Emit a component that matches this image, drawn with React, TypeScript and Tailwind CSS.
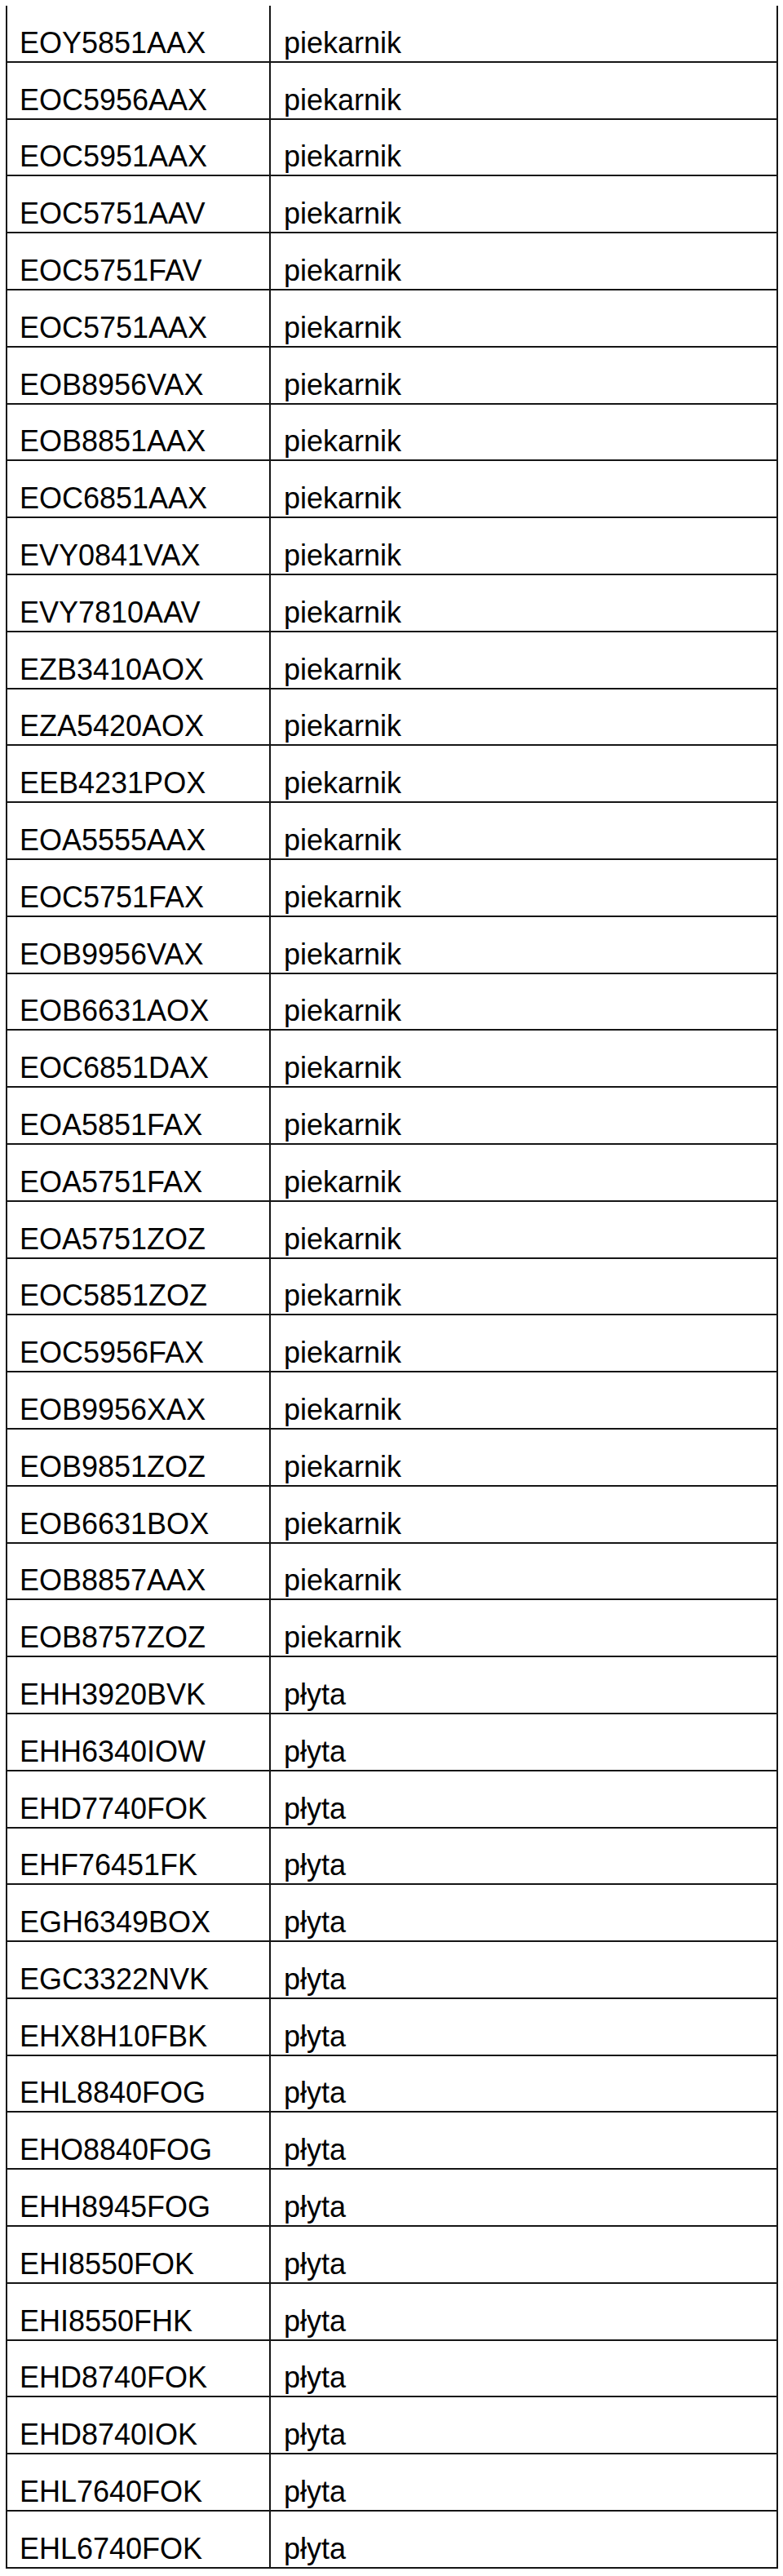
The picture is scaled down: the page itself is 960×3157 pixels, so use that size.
const rows: [string, string][] = [
  ["EOY5851AAX", "piekarnik"],
  ["EOC5956AAX", "piekarnik"],
  ["EOC5951AAX", "piekarnik"],
  ["EOC5751AAV", "piekarnik"],
  ["EOC5751FAV", "piekarnik"],
  ["EOC5751AAX", "piekarnik"],
  ["EOB8956VAX", "piekarnik"],
  ["EOB8851AAX", "piekarnik"],
  ["EOC6851AAX", "piekarnik"],
  ["EVY0841VAX", "piekarnik"],
  ["EVY7810AAV", "piekarnik"],
  ["EZB3410AOX", "piekarnik"],
  ["EZA5420AOX", "piekarnik"],
  ["EEB4231POX", "piekarnik"],
  ["EOA5555AAX", "piekarnik"],
  ["EOC5751FAX", "piekarnik"],
  ["EOB9956VAX", "piekarnik"],
  ["EOB6631AOX", "piekarnik"],
  ["EOC6851DAX", "piekarnik"],
  ["EOA5851FAX", "piekarnik"],
  ["EOA5751FAX", "piekarnik"],
  ["EOA5751ZOZ", "piekarnik"],
  ["EOC5851ZOZ", "piekarnik"],
  ["EOC5956FAX", "piekarnik"],
  ["EOB9956XAX", "piekarnik"],
  ["EOB9851ZOZ", "piekarnik"],
  ["EOB6631BOX", "piekarnik"],
  ["EOB8857AAX", "piekarnik"],
  ["EOB8757ZOZ", "piekarnik"],
  ["EHH3920BVK", "płyta"],
  ["EHH6340IOW", "płyta"],
  ["EHD7740FOK", "płyta"],
  ["EHF76451FK", "płyta"],
  ["EGH6349BOX", "płyta"],
  ["EGC3322NVK", "płyta"],
  ["EHX8H10FBK", "płyta"],
  ["EHL8840FOG", "płyta"],
  ["EHO8840FOG", "płyta"],
  ["EHH8945FOG", "płyta"],
  ["EHI8550FOK", "płyta"],
  ["EHI8550FHK", "płyta"],
  ["EHD8740FOK", "płyta"],
  ["EHD8740IOK", "płyta"],
  ["EHL7640FOK", "płyta"],
  ["EHL6740FOK", "płyta"],
];

export default function App() {
  return (
    <div className="w-[960px] h-[3157px] bg-white pt-[7px] pl-[7px] font-['Liberation_Sans',Arial,sans-serif] text-black">
      <div className="w-[947px] border-x-2 border-[#151515]">
        {rows.map(([model, type], i) => (
          <div
            key={i}
            className="grid grid-cols-[323px_1fr] h-[69.8px] border-b-2 border-[#151515]"
          >
            <div className="flex items-end border-r-2 border-[#151515] pl-[15px] pb-[4px] text-[36px] leading-[36px]">
              {model}
            </div>
            <div className="flex items-end pl-[16px] pb-[4px] text-[36px] leading-[36px]">
              {type}
            </div>
          </div>
        ))}
      </div>
    </div>
  );
}
